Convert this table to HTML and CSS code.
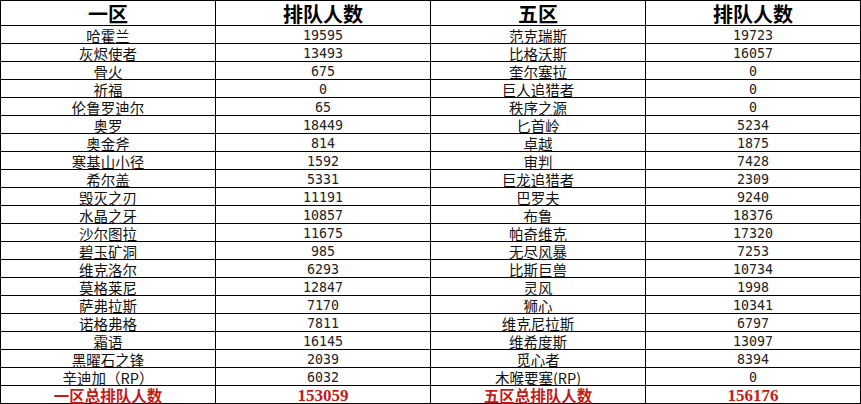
FILE: index.html
```html
<!DOCTYPE html>
<html lang="zh-CN">
<head>
<meta charset="utf-8">
<title>排队人数</title>
<link rel="stylesheet" href="styles.css">
</head>
<body>
<div class="sheet">
  <div class="cell head zone">一区</div><div class="cell head">排队人数</div><div class="cell head zone">五区</div><div class="cell head">排队人数</div>

  <div class="cell name">哈霍兰</div><div class="cell num">19595</div><div class="cell name">范克瑞斯</div><div class="cell num">19723</div>
  <div class="cell name">灰烬使者</div><div class="cell num">13493</div><div class="cell name">比格沃斯</div><div class="cell num">16057</div>
  <div class="cell name">骨火</div><div class="cell num">675</div><div class="cell name">奎尔塞拉</div><div class="cell num">0</div>
  <div class="cell name">祈福</div><div class="cell num">0</div><div class="cell name">巨人追猎者</div><div class="cell num">0</div>
  <div class="cell name">伦鲁罗迪尔</div><div class="cell num">65</div><div class="cell name">秩序之源</div><div class="cell num">0</div>
  <div class="cell name">奥罗</div><div class="cell num">18449</div><div class="cell name">匕首岭</div><div class="cell num">5234</div>
  <div class="cell name">奥金斧</div><div class="cell num">814</div><div class="cell name">卓越</div><div class="cell num">1875</div>
  <div class="cell name">寒基山小径</div><div class="cell num">1592</div><div class="cell name">审判</div><div class="cell num">7428</div>
  <div class="cell name">希尔盖</div><div class="cell num">5331</div><div class="cell name">巨龙追猎者</div><div class="cell num">2309</div>
  <div class="cell name">毁灭之刃</div><div class="cell num">11191</div><div class="cell name">巴罗夫</div><div class="cell num">9240</div>
  <div class="cell name">水晶之牙</div><div class="cell num">10857</div><div class="cell name">布鲁</div><div class="cell num">18376</div>
  <div class="cell name">沙尔图拉</div><div class="cell num">11675</div><div class="cell name">帕奇维克</div><div class="cell num">17320</div>
  <div class="cell name">碧玉矿洞</div><div class="cell num">985</div><div class="cell name">无尽风暴</div><div class="cell num">7253</div>
  <div class="cell name">维克洛尔</div><div class="cell num">6293</div><div class="cell name">比斯巨兽</div><div class="cell num">10734</div>
  <div class="cell name">莫格莱尼</div><div class="cell num">12847</div><div class="cell name">灵风</div><div class="cell num">1998</div>
  <div class="cell name">萨弗拉斯</div><div class="cell num">7170</div><div class="cell name">狮心</div><div class="cell num">10341</div>
  <div class="cell name">诺格弗格</div><div class="cell num">7811</div><div class="cell name">维克尼拉斯</div><div class="cell num">6797</div>
  <div class="cell name">霜语</div><div class="cell num">16145</div><div class="cell name">维希度斯</div><div class="cell num">13097</div>
  <div class="cell name">黑曜石之锋</div><div class="cell num">2039</div><div class="cell name">觅心者</div><div class="cell num">8394</div>
  <div class="cell name">辛迪加（RP）</div><div class="cell num">6032</div><div class="cell name">木喉要塞(RP)</div><div class="cell num">0</div>

  <div class="cell total">一区总排队人数</div><div class="cell total totalnum">153059</div><div class="cell total">五区总排队人数</div><div class="cell total totalnum">156176</div>
</div>
</body>
</html>
```

FILE: styles.css
```css
html, body {
  margin: 0;
  padding: 0;
  background: #ffffff;
}

.sheet {
  display: grid;
  grid-template-columns: repeat(4, 214px);
  grid-template-rows: 24px repeat(21, 17px);
  gap: 1px;
  padding: 1px;
  width: 859px;
  background: #000000;
}

.cell {
  background: #ffffff;
  display: flex;
  align-items: center;
  justify-content: center;
  white-space: nowrap;
  color: #111111;
  font-family: "Noto Sans CJK SC", sans-serif;
  font-size: 14.5px;
  line-height: 15px;
  padding-top: 1px;
}

.head {
  font-size: 20px;
  font-weight: 700;
  line-height: 21px;
  padding-top: 0;
  color: #000000;
}

.num {
  font-family: "DejaVu Sans Mono", monospace;
  font-size: 13.3px;
  color: #222222;
}

.total {
  color: #c41a1a;
  font-weight: 700;
  font-size: 15.5px;
}

.totalnum {
  font-family: "Liberation Serif", serif;
  font-size: 17px;
}
```
